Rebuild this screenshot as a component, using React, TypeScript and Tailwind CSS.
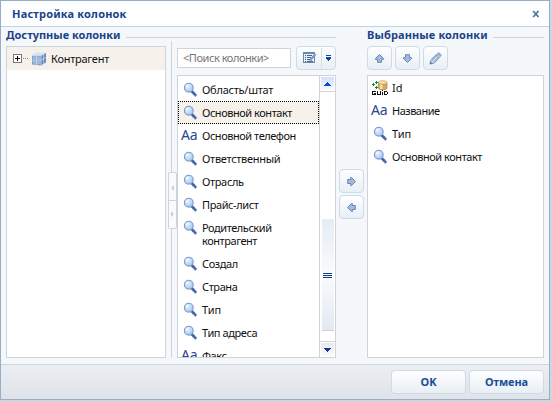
import React from "react";

type Kind = "lookup" | "text" | "guid";
type Column = { label: string; kind: Kind; selected?: boolean; track?: string };

const available: Column[] = [
  { label: "Область/штат", kind: "lookup", track: "tracking-[-0.25px]" },
  { label: "Основной контакт", kind: "lookup", selected: true, track: "tracking-[-0.46px]" },
  { label: "Основной телефон", kind: "text", track: "tracking-[-0.46px]" },
  { label: "Ответственный", kind: "lookup", track: "tracking-[-0.3px]" },
  { label: "Отрасль", kind: "lookup", track: "tracking-[-0.35px]" },
  { label: "Прайс-лист", kind: "lookup" },
  { label: "Родительский контрагент", kind: "lookup", track: "tracking-[-0.45px]" },
  { label: "Создал", kind: "lookup" },
  { label: "Страна", kind: "lookup" },
  { label: "Тип", kind: "lookup", track: "tracking-[-0.1px]" },
  { label: "Тип адреса", kind: "lookup" },
  { label: "Факс", kind: "text" },
];

const chosen: Column[] = [
  { label: "Id", kind: "guid", track: "tracking-normal" },
  { label: "Название", kind: "text", track: "tracking-[-0.5px]" },
  { label: "Тип", kind: "lookup", track: "tracking-[-0.1px]" },
  { label: "Основной контакт", kind: "lookup", track: "tracking-[-0.46px]" },
];

function LookupIcon() {
  return (
    <svg width="16" height="16" viewBox="0 0 16 16" className="shrink-0">
      <defs>
        <radialGradient id="lens" cx="0.4" cy="0.35" r="0.7">
          <stop offset="0" stopColor="#e6f4ff" />
          <stop offset="1" stopColor="#9cc4ee" />
        </radialGradient>
      </defs>
      <path d="M10 9.5l3.3 3.3" stroke="#4463a8" strokeWidth="2.7" strokeLinecap="square" />
      <path d="M11.8 13.2l1 .9M13.5 11.6l1 .9" stroke="#b3bdd8" strokeWidth="1" />
      <circle cx="6.8" cy="5.7" r="4.4" fill="url(#lens)" stroke="#8098c9" strokeWidth="1.1" />
      <path d="M4.1 5a2.9 2.9 0 012.2-2" stroke="#fff" fill="none" />
    </svg>
  );
}

function GuidIcon() {
  return (
    <svg width="16" height="16" viewBox="0 0 16 16" className="shrink-0">
      <path d="M6.5 2.3v6c0 2.2 8.5 2.2 8.5 0v-6z" fill="#dba956" stroke="#96753d" strokeWidth="0.6" />
      <path d="M8 4v5h2.5V4z" fill="#f8dc9b" />
      <ellipse cx="10.75" cy="2.4" rx="4.2" ry="1.7" fill="#ffe4a5" stroke="#aa8a51" strokeWidth="0.6" />
      <g shapeRendering="crispEdges">
        <path d="M3 2.5h3M4.5 1v3M0 4.5h3M1.5 3v3M3 7.5h3M4.5 6v3" stroke="#18822e" />
        <path d="M0 10h16v6H0z" fill="#fff" />
        <path d="M4 11.5H.5v3h3v-1.5H2M5.5 11v3.5h3V11M10.5 12v3M10.5 10v1M12.5 11v4M12 11.5h3M15.5 12v2M12 14.5h3" fill="none" stroke="#111" />
      </g>
    </svg>
  );
}

function KindIcon({ kind }: { kind: Kind }) {
  if (kind === "text")
    return <span className="w-4 shrink-0 -ml-px whitespace-nowrap text-[14px] leading-[13px] tracking-[-0.3px] text-[#2b4590]">Aa</span>;
  return kind === "guid" ? <GuidIcon /> : <LookupIcon />;
}

function ColumnRow({ column }: { column: Column }) {
  return (
    <li
      className={
        "flex shrink-0 items-start border border-dotted pl-[3px] pt-[3px] pb-[4px] " +
        (column.selected ? "border-black bg-[#f6f1eb]" : "border-transparent")
      }
    >
      <span className="flex h-[13px] w-[20px] shrink-0 items-start">
        <KindIcon kind={column.kind} />
      </span>
      <span className={"w-[100px] pt-[1px] leading-[13px] text-[#111] " + (column.track ?? "tracking-[-0.4px]")}>{column.label}</span>
    </li>
  );
}

const raised = "border border-[#cfdae8] rounded-[4px] bg-linear-to-b from-[#fefeff] to-[#e9eff5]";

function ToolButton({ children }: { children: React.ReactNode }) {
  return <button className={"flex h-[24px] w-[25px] shrink-0 items-center justify-center " + raised}>{children}</button>;
}

function Arrow({ turn }: { turn: string }) {
  return (
    <svg width="11" height="11" viewBox="0 0 11 11" className={turn}>
      <path d="M5.5 1.5L9.6 5.6v.7H7.5V9.3h-4V6.3H1.4v-.7z" fill="#a3bbdb" stroke="#5c7dab" strokeWidth=".9" />
    </svg>
  );
}

function Heading({ children, track }: { children: string; track: string }) {
  return (
    <div className="flex h-[19px] items-start gap-[5px]">
      <h2 className={"whitespace-nowrap text-[11px] font-bold leading-[16px] text-[#1b4289] " + track}>{children}</h2>
      <div className="mt-[10px] h-px flex-1 bg-[#ced4d9]" />
    </div>
  );
}

export default function App() {
  return (
    <div className="h-[402px] w-[552px] overflow-hidden bg-[#cdd7e2] pb-[2px] pr-[2px] font-['Noto_Sans','Open_Sans',sans-serif] text-[11px]">
      <div className="flex h-[400px] w-[550px] flex-col border border-[#9badc5] bg-[#f4f8fa]">
        <header className="flex h-[26px] shrink-0 items-center justify-between border-b border-[#c3d2df] bg-[#fcfeff] pl-[11px] pr-[9px]">
          <h1 className="pt-px font-bold tracking-[0.18px] text-[#1b4289]">Настройка колонок</h1>
          <svg width="8" height="8" viewBox="0 0 8 8" className="mt-[1px]">
            <path d="M1.2 1l5.3 6M6.5 1L1.2 7" stroke="#50719a" strokeWidth="1.7" />
          </svg>
        </header>

        <main className="flex h-[337px] shrink-0 pl-[5px] pr-[5px]">
          <section className="flex w-[330px] shrink-0 flex-col">
            <Heading track="tracking-[0px]">Доступные колонки</Heading>
            <div className="flex h-[312px]">
              <div className="h-full w-[160px] shrink-0 border border-[#ced4d9] bg-white">
                <div className="flex h-[23px] items-center bg-[#f6f1eb] pl-[6px]">
                  <svg width="15" height="9" viewBox="0 0 15 9" shapeRendering="crispEdges">
                    <rect x=".5" y=".5" width="8" height="8" fill="#fff" stroke="#777" />
                    <path d="M2 4.5h5M4.5 2v5" stroke="#000" />
                    <path d="M10 4.5h5" stroke="#888" strokeDasharray="1 1" />
                  </svg>
                  <svg width="16" height="16" viewBox="0 0 16 16" className="ml-[3px] mt-[1px]">
                    <path d="M1 4l4-2.5h10l-2 3z" fill="#d5e3f2" />
                    <path d="M1 4.5h9v10l-9-1z" fill="#7fa1ce" />
                    <path d="M10 4.5l5-2.7v9.4l-5 3.3z" fill="#6588ba" />
                    <path d="M2 5.5h3v3H2zM6 5.5h3v3.2H6zM2 10h3v2.7H2zM6 10h3v3H6z" fill="#9db9de" />
                    <path d="M5.5 4v10M1 9.2h9l5-2.8M10 4.5v10M1 4.5h9L15 2M12.6 3.2v9.5M5.5 4.5L9 1.7" stroke="#d3e1f2" strokeWidth=".7" fill="none" />
                  </svg>
                  <span className="ml-[4px] mt-[2px] text-[#111] tracking-[-0.25px]">Контрагент</span>
                </div>
              </div>

              <div className="relative -mt-[5px] w-[11px] shrink-0">
                <div className="ml-[5px] h-full w-px bg-[#ced4d9]" />
                <div className="absolute left-[2px] top-[131px] h-[57px] w-[9px] rounded-[2px] border border-[#ced4d9] bg-[#f8fafb]">
                  <svg width="7" height="55" viewBox="0 0 7 55">
                    <path d="M0 27.5h7" stroke="#ced4d9" />
                    <path d="M5 12v6l-3-3zM2 38v6l3-3z" fill="#cbd1d8" />
                  </svg>
                </div>
              </div>

              <div className="flex w-[159px] shrink-0 flex-col">
                <div className="flex h-[29px] items-start justify-between">
                  <div className="mt-[2px] flex h-[20px] w-[114px] items-center whitespace-nowrap border border-[#ced4d9] bg-white pl-[5px] pt-px tracking-[-0.45px] text-[#777]">
                    &lt;Поиск колонки&gt;
                  </div>
                  <button className={"flex h-[24px] w-[40px] shrink-0 items-center " + raised}>
                    <svg width="38" height="22" viewBox="0 0 38 22" shapeRendering="crispEdges">
                      <path d="M6.5 5.5h11v10h-11z" fill="#e8f0f9" stroke="#6c87ab" />
                      <path d="M6 6h12" stroke="#6c87ab" strokeWidth="2" />
                      <path d="M8 8.5h1M8 10.5h1M8 12.5h1M8 14.5h1" stroke="#40618f" />
                      <path d="M10 8.5h5M10 10.5h4M10 12.5h3M10 14.5h6" stroke="#40618f" />
                      <path d="M18.5 7l-4.3 5-1 2.5" stroke="#7997bd" strokeWidth="2" fill="none" shapeRendering="auto" />
                      <path d="M24.5 1v20" stroke="#d5dfea" />
                      <path d="M29 8.5h5" stroke="#064a9c" />
                      <path d="M29 10h5v2h-1v1h-1v1h-1v-1h-1v-1h-1z" fill="#064a9c" />
                    </svg>
                  </button>
                </div>
                <div className="flex h-[283px] border border-[#ced4d9] bg-white">
                  <ul className="flex h-full w-[141px] shrink-0 flex-col overflow-hidden pt-[2px]">
                    {available.map((c) => <ColumnRow key={c.label} column={c} />)}
                  </ul>
                  <div className="flex h-full w-[16px] flex-col items-center border-l border-[#ced4d9]">
                    <div className="flex h-[16px] w-full items-center justify-center border-b border-[#ced4d9] p-px">
                      <div className="flex h-full w-full items-center justify-center bg-linear-to-b from-[#d2e0fa] to-[#f7faff]">
                        <svg width="7" height="4" viewBox="0 0 7 4" shapeRendering="crispEdges"><path d="M3 0h1v1h1v1h1v1h1v1H0V3h1V2h1V1h1z" fill="#0a4cc5" /></svg>
                      </div>
                    </div>
                    <div className="mt-[127px] flex h-[112px] w-[12px] flex-col items-center justify-center gap-px border-b border-[#ced4d9] bg-linear-to-b from-[#e4ecf4] via-[#f9fbfd] to-[#e2e9f1] pt-[2px]">
                      <div className="h-px w-[9px] bg-[#103e86]" />
                      <div className="h-px w-[9px] bg-[#103e86]" />
                      <div className="h-px w-[9px] bg-[#103e86]" />
                    </div>
                    <div className="mt-[10px] flex h-[16px] w-full items-center justify-center border-t border-[#ced4d9] p-px">
                      <div className="flex h-full w-full items-center justify-center bg-linear-to-b from-[#e6e9ed] to-[#fafafa]">
                        <svg width="7" height="4" viewBox="0 0 7 4" shapeRendering="crispEdges"><path d="M0 0h7v1H6v1H5v1H4v1H3V3H2V2H1V1H0z" fill="#1d2f92" /></svg>
                      </div>
                    </div>
                  </div>
                </div>
              </div>
            </div>
          </section>

          <div className="flex w-[31px] shrink-0 flex-col items-center gap-[2px] pt-[142px]">
            <ToolButton><Arrow turn="rotate-90" /></ToolButton>
            <ToolButton><Arrow turn="-rotate-90" /></ToolButton>
          </div>

          <section className="flex w-[177px] shrink-0 flex-col">
            <Heading track="tracking-[0.12px]">Выбранные колонки</Heading>
            <div className="flex h-[29px] shrink-0 gap-[3px]">
              <ToolButton><Arrow turn="rotate-0" /></ToolButton>
              <ToolButton><Arrow turn="rotate-180" /></ToolButton>
              <ToolButton>
                <svg width="13" height="13" viewBox="0 0 13 13">
                  <path d="M1 12l.7-4 5.8-5.7 3.2 3.2L5 11.3z" fill="#a2b8d6" stroke="#6f8cb5" strokeWidth=".8" />
                  <path d="M3.5 9.7l5.3-5.3" stroke="#dce8f6" />
                  <path d="M8.4 1.8L9.8.6l2.6 2.6-1.2 1.4z" fill="#a2b8d6" stroke="#6f8cb5" strokeWidth=".8" />
                  <path d="M1.8 8.2l3 3" stroke="#e7eef8" />
                  <path d="M.8 12.2l.6-2.6 2 2z" fill="#557bb0" />
                </svg>
              </ToolButton>
            </div>
            <ul className="flex h-[283px] flex-col border border-[#ced4d9] bg-white">
              {chosen.map((c) => <ColumnRow key={c.label} column={c} />)}
            </ul>
          </section>
        </main>

        <footer className="flex flex-1 items-start justify-end gap-[3px] border-t border-[#ced4d9] bg-linear-to-b from-[#ebeef2] to-[#dfe3e8] pr-[5px] pt-[5px]">
          <button className={"h-[24px] w-[75px] pt-px font-bold text-[#1a4f97] " + raised}>OK</button>
          <button className={"h-[24px] w-[75px] pt-px font-bold tracking-[-0.1px] text-[#1a4f97] " + raised}>Отмена</button>
        </footer>
      </div>
    </div>
  );
}
